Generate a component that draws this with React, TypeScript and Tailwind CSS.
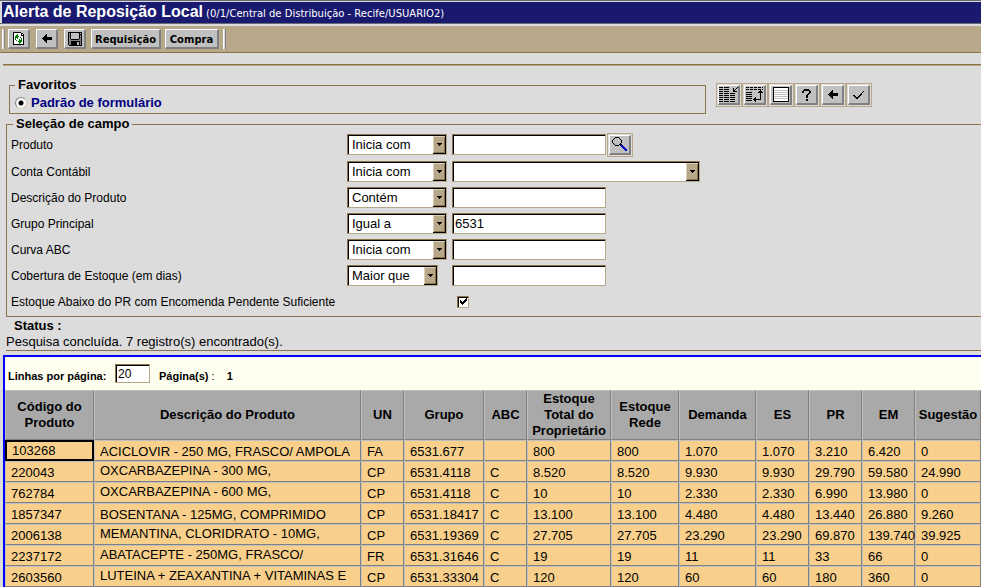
import React, { useState } from "react";

const arial = "font-['Liberation_Sans',Arial,sans-serif]";

type IconProps = { rows: string[] };

/* Pixel icons: each string is one row, "#" = black, letters pick a colour. */
const palette: Record<string, string> = {
  "#": "#000000",
  w: "#ffffff",
  g: "#008000",
  b: "#0000d0",
  s: "#c0c0c0",
  d: "#808080",
};

function PixelIcon({ rows }: IconProps) {
  const width = Math.max(...rows.map((r) => r.length));
  return (
    <svg
      width={width}
      height={rows.length}
      viewBox={`0 0 ${width} ${rows.length}`}
      shapeRendering="crispEdges"
      aria-hidden="true"
    >
      {rows.flatMap((row, y) =>
        row
          .split("")
          .map((c, x) =>
            palette[c] ? <rect key={`${x}-${y}`} x={x} y={y} width={1} height={1} fill={palette[c]} /> : null
          )
      )}
    </svg>
  );
}

const refreshIcon = [
  "########...",
  "#wwwwwww##.",
  "#wwwgwww#w#",
  "#wwggwww###",
  "#wggggwwww#",
  "#wgggwwgww#",
  "#wgwgwwwgw#",
  "#wgwwwgwgw#",
  "#wwgwwgggw#",
  "#wwwwggggw#",
  "#wwwwwggww#",
  "#wwwwwgwww#",
  "###########",
];
const backIcon = [
  "....#.....",
  "...##.....",
  "..###.....",
  ".#########",
  "##########",
  ".#########",
  "..###.....",
  "...##.....",
  "....#.....",
];
const saveIcon = [
  "##############",
  "#d#ssssssss#s#",
  "#d#ssssssss###",
  "#d#ssssssss#d#",
  "#d#ssssssss#d#",
  "#d#ssssssss#d#",
  "#d#ssssssss#d#",
  "#dd########dd#",
  "#dddddddddddd#",
  "#dd#########d#",
  "#dd######ss#d#",
  "#dd######ss#d#",
  "#dd######ss#d#",
  ".#############",
];
const columnsIcon = [
  "####.#####........#",
  "..............#..#.",
  "####.#####....#.#..",
  "..............##...",
  "####.#####....####.",
  "...................",
  "####.#####.#####...",
  "...................",
  "####.#####.#####...",
  "...................",
  "####.#####.#####...",
  "...................",
  "####.#####.#####...",
  "...................",
  "####.#####.#####...",
];
const sortIcon = [
  "###.###.###.###.#",
  ".................",
  "###.###.###.###.#",
  "..............#..",
  ".............###.",
  "######......#####",
  "..............#..",
  "######........#..",
  "..............#..",
  "######........#..",
  ".........#....#..",
  "######..##....#..",
  ".......########..",
  "######..##.......",
  ".........#.......",
];
const listIcon = [
  "################",
  "#wwwwwwwwwwwwww#",
  "#wwwwwwwwwwwwww#",
  "#ssssssssssssss#",
  "#wwwwwwwwwwwwww#",
  "#ssssssssssssss#",
  "#wwwwwwwwwwwwww#",
  "#ssssssssssssss#",
  "#wwwwwwwwwwwwww#",
  "#ssssssssssssss#",
  "#wwwwwwwwwwwwww#",
  "#ssssssssssssss#",
  "#wwwwwwwwwwwwww#",
  "#wwwwwwwwwwwwww#",
  "################",
];
const helpIcon = [
  "..#####..",
  ".#######.",
  "##.....##",
  "##.....##",
  "......##.",
  ".....##..",
  "....##...",
  "....##...",
  "....##...",
  ".........",
  "....##...",
  "....##...",
];
const checkIcon = [
  "..........#",
  ".........#.",
  "........#..",
  ".......##..",
  "##....##...",
  ".##..##....",
  "..####.....",
  "...##......",
];
const lensIcon = [
  "...####.........",
  "..#....#........",
  ".#......#.......",
  "#........#......",
  "#........#......",
  "#........#......",
  ".#......#.......",
  "..#....###......",
  "...####.bb#.....",
  ".........bbb....",
  "..........bbb...",
  "...........bbb..",
  "............bbb.",
  ".............bb.",
];

function ToolButton({ label, className, children }: { label?: string; className: string; children: React.ReactNode }) {
  return (
    <button
      type="button"
      aria-label={label}
      className={`flex h-5 shrink-0 items-center justify-center border-t border-r-2 border-b-2 border-l border-t-white border-r-[#808080] border-b-[#808080] border-l-white bg-[#c0c0c0] text-black ${className}`}
    >
      {children}
    </button>
  );
}

function FramedButton({ label, icon }: { label: string; icon: string[] }) {
  return (
    <span className="flex shrink-0 border border-[#b8a88a] p-px">
      <ToolButton label={label} className="w-[22px]">
        <PixelIcon rows={icon} />
      </ToolButton>
    </span>
  );
}

function Grip() {
  return <span className="h-[20px] w-[3px] shrink-0 border-x border-l-white border-r-[#808080] bg-[#dcdcdc]" />;
}

function DropDown({ label, value, className }: { label: string; value: string; className: string }) {
  return (
    <div
      className={`relative h-[21px] shrink-0 border border-t-[#8b7349] border-r-[#b8a88a] border-b-[#b8a88a] border-l-[#8b7349] ${className}`}
    >
      <select
        aria-label={label}
        defaultValue={value}
        className="block h-[19px] w-full appearance-none border-t border-l border-black bg-white pl-[3px] text-[13px] leading-[18px] text-black outline-none"
      >
        <option>{value}</option>
      </select>
      <span className="pointer-events-none absolute top-px right-0 flex h-[18px] w-[13px] items-center justify-center border-r border-b border-black bg-[#b8a88a] shadow-[inset_1px_1px_0_#dccfb8,inset_-1px_-1px_0_#8b7349]">
        <PixelIcon rows={["#####", ".###.", "..#.."]} />
      </span>
    </div>
  );
}

function TextBox({ id, value = "", className }: { id: string; value?: string; className: string }) {
  return (
    <input
      id={id}
      type="text"
      defaultValue={value}
      className={`h-[21px] shrink-0 border border-t-[#8b7349] border-r-[#b8a88a] border-b-[#b8a88a] border-l-[#8b7349] bg-white px-[2px] text-[13px] text-black shadow-[inset_1px_1px_0_#000] outline-none ${className}`}
    />
  );
}

type Field = { id: string; label: string; op: string; opWidth: string; kind: "lookup" | "select" | "text"; value?: string };

const fields: Field[] = [
  { id: "produto", label: "Produto", op: "Inicia com", opWidth: "w-[100px]", kind: "lookup" },
  { id: "conta", label: "Conta Contábil", op: "Inicia com", opWidth: "w-[100px]", kind: "select" },
  { id: "descricao", label: "Descrição do Produto", op: "Contém", opWidth: "w-[100px]", kind: "text" },
  { id: "grupo", label: "Grupo Principal", op: "Igual a", opWidth: "w-[100px]", kind: "text", value: "6531" },
  { id: "curva", label: "Curva ABC", op: "Inicia com", opWidth: "w-[100px]", kind: "text" },
  { id: "cobertura", label: "Cobertura de Estoque (em dias)", op: "Maior que", opWidth: "w-[91px]", kind: "text" },
];

const columns = [
  { title: "Código do Produto", width: "w-[89px]" },
  { title: "Descrição do Produto", width: "" },
  { title: "UN", width: "w-[43px]" },
  { title: "Grupo", width: "w-[80px]" },
  { title: "ABC", width: "w-[43px]" },
  { title: "Estoque Total do Proprietário", width: "w-[84px]" },
  { title: "Estoque Rede", width: "w-[68px]" },
  { title: "Demanda", width: "w-[77px]" },
  { title: "ES", width: "w-[53px]" },
  { title: "PR", width: "w-[53px]" },
  { title: "EM", width: "w-[53px]" },
  { title: "Sugestão", width: "w-[66px]" },
];

const records = [
  ["103268", "ACICLOVIR - 250 MG, FRASCO/ AMPOLA", "FA", "6531.677", "", "800", "800", "1.070", "1.070", "3.210", "6.420", "0"],
  ["220043", "OXCARBAZEPINA - 300 MG,", "CP", "6531.4118", "C", "8.520", "8.520", "9.930", "9.930", "29.790", "59.580", "24.990"],
  ["762784", "OXCARBAZEPINA - 600 MG,", "CP", "6531.4118", "C", "10", "10", "2.330", "2.330", "6.990", "13.980", "0"],
  ["1857347", "BOSENTANA - 125MG, COMPRIMIDO", "CP", "6531.18417", "C", "13.100", "13.100", "4.480", "4.480", "13.440", "26.880", "9.260"],
  ["2006138", "MEMANTINA, CLORIDRATO - 10MG,", "CP", "6531.19369", "C", "27.705", "27.705", "23.290", "23.290", "69.870", "139.740", "39.925"],
  ["2237172", "ABATACEPTE - 250MG, FRASCO/", "FR", "6531.31646", "C", "19", "19", "11", "11", "33", "66", "0"],
  ["2603560", "LUTEINA + ZEAXANTINA + VITAMINAS E", "CP", "6531.33304", "C", "120", "120", "60", "60", "180", "360", "0"],
];

const clipped = new Set(["220043", "762784", "2006138", "2237172", "2603560"]);

const cellBorder = "border-t border-r border-b border-l border-t-[#c0c0c0] border-r-[#808080] border-b-[#808080] border-l-[#c0c0c0]";

export default function App() {
  const [selected, setSelected] = useState("103268");

  return (
    <div className={`min-h-screen overflow-hidden bg-[#dcdcdc] text-[13px] text-black ${arial}`}>
      <header className="flex h-6 items-center gap-[3px] border-t border-b border-[#696973] bg-[#191970] pl-[3px] whitespace-nowrap text-white shadow-[inset_2px_1px_0_#dcdcdc]">
        <h1 className="text-[16px] leading-5 font-bold">Alerta de Reposição Local</h1>
        <span className="pt-1 font-['DejaVu_Sans',Verdana,sans-serif] text-[10px] leading-4">
          (0/1/Central de Distribuição - Recife/USUARIO2)
        </span>
      </header>

      <div className="mt-0.5 flex h-[27px] items-center border-b border-[#8b7349] bg-[#b8a88a] pl-0.5 font-['DejaVu_Sans',Verdana,sans-serif] text-[10px] font-bold">
        <Grip />
        <div className="ml-[3px] flex gap-1.5">
          <ToolButton label="Atualizar" className="w-[22px]">
            <PixelIcon rows={refreshIcon} />
          </ToolButton>
          <ToolButton label="Voltar" className="w-[22px]">
            <PixelIcon rows={backIcon} />
          </ToolButton>
          <ToolButton label="Salvar" className="w-[22px]">
            <PixelIcon rows={saveIcon} />
          </ToolButton>
        </div>
        <div className="mr-1 ml-[5px] flex gap-1">
          <ToolButton className="w-[70px] pt-0.5">Requisição</ToolButton>
          <ToolButton className="w-[54px] pt-0.5">Compra</ToolButton>
        </div>
        <Grip />
      </div>

      <div className="mt-[11px] ml-[3px] h-0.5 border-t border-[#8b7349] bg-[#b8a88a]" />

      <section className="mt-[11px] flex items-start gap-[10px] pl-[9px]">
        <fieldset className="w-[697px] border border-[#8b7349] pt-px pb-px pl-[5px]">
          <legend className="px-[3px] text-[13px] leading-4 font-bold">Favoritos</legend>
          <label className="flex h-[18px] items-center gap-1 font-bold text-[#000080]">
            <input
              type="radio"
              name="favorito"
              defaultChecked
              className="h-3 w-3 appearance-none rounded-full border border-t-[#808080] border-r-[#d8cdb8] border-b-[#d8cdb8] border-l-[#808080] bg-white checked:bg-[radial-gradient(circle,#000_2px,#fff_3px)]"
            />
            <span>Padrão de formulário</span>
          </label>
        </fieldset>
        <div className="mt-1.5 flex">
          <FramedButton label="Colunas" icon={columnsIcon} />
          <FramedButton label="Ordenar" icon={sortIcon} />
          <FramedButton label="Lista" icon={listIcon} />
          <FramedButton label="Ajuda" icon={helpIcon} />
          <FramedButton label="Voltar" icon={backIcon} />
          <FramedButton label="Confirmar" icon={checkIcon} />
        </div>
      </section>

      <fieldset className="mt-[2px] ml-[6px] border border-r-0 border-[#8b7349] pb-0.5 pl-1">
        <legend className="ml-[2px] px-[3px] leading-4 font-bold">Seleção de campo</legend>
        <div className="flex flex-col gap-px">
          {fields.map((f) => (
            <div key={f.id} className="flex h-[25px] items-center first:mb-px">
              <label htmlFor={f.id} className="w-[336px] shrink-0 pt-px text-[12px]">
                {f.label}
              </label>
              <div className="w-[105px] shrink-0">
                <DropDown label={`Operador: ${f.label}`} value={f.op} className={f.opWidth} />
              </div>
              {f.kind === "select" ? (
                <DropDown label={f.label} value="" className="w-[248px]" />
              ) : (
                <TextBox id={f.id} value={f.value} className="w-[154px]" />
              )}
              {f.kind === "lookup" && (
                <span className="ml-px flex">
                  <FramedButton label="Pesquisar produto" icon={lensIcon} />
                </span>
              )}
            </div>
          ))}
          <div className="flex h-[25px] items-center">
            <label htmlFor="pendente" className="w-[336px] shrink-0 pt-px text-[12px]">
              Estoque Abaixo do PR com Encomenda Pendente Suficiente
            </label>
            <span className="ml-[110px] grid">
              <input
                id="pendente"
                type="checkbox"
                defaultChecked
                className="peer col-start-1 row-start-1 h-3 w-3 appearance-none border border-t-[#8b7349] border-r-[#b8a88a] border-b-[#b8a88a] border-l-[#8b7349] bg-white shadow-[inset_1px_1px_0_#000]"
              />
              <span className="pointer-events-none invisible col-start-1 row-start-1 self-center justify-self-center peer-checked:visible">
                <PixelIcon rows={["......#", ".....##", "#...###", "##.###.", "#####..", ".###...", "..#...."]} />
              </span>
            </span>
          </div>
        </div>
      </fieldset>

      <section className="ml-[6px] border-b border-[#8b7349]">
        <h2 className="pl-2 leading-[17px] font-bold">Status :</h2>
        <p className="leading-4">Pesquisa concluída. 7 registro(s) encontrado(s).</p>
      </section>

      <main className="mt-1 ml-[3px] border-t-2 border-l-2 border-[#0000ff] bg-[#fffff0]">
        <div className="flex h-[33px] items-center pl-[3px] text-[11px] font-bold">
          <label htmlFor="linhas" className="w-[107px] pt-1.5">
            Linhas por página:
          </label>
          <input
            id="linhas"
            type="text"
            defaultValue="20"
            className="h-[19px] w-[35px] border border-t-[#8b7349] border-r-[#b8a88a] border-b-[#b8a88a] border-l-[#8b7349] bg-white px-[2px] text-[12px] font-normal shadow-[inset_1px_1px_0_#000] outline-none"
          />
          <span className="pt-1.5 pl-[9px]">
            Página(s) <span className="font-normal">:</span>
          </span>
          <span className="pt-1.5 pl-3">1</span>
        </div>

        <table className="w-full min-w-[976px] table-fixed border-separate border-spacing-0">
          <thead>
            <tr className="h-[50px] bg-[#a9a9a9]">
              {columns.map((c) => (
                <th key={c.title} className={`${cellBorder} ${c.width} p-0 align-middle text-[13px] leading-4 font-bold`}>
                  {c.title}
                </th>
              ))}
            </tr>
          </thead>
          <tbody>
            {records.map((r) => (
              <tr key={r[0]} className="h-[21px] bg-[#f9d08b]" onClick={() => setSelected(r[0])}>
                {r.map((value, i) => (
                  <td
                    key={i}
                    className={
                      i === 0 && selected === r[0]
                        ? "border-2 border-black p-0 pt-px pl-[5px] leading-4 whitespace-nowrap"
                        : `${cellBorder} p-0 pl-[5px] whitespace-nowrap ${
                            i === 1 && clipped.has(r[0]) ? "pt-px align-top leading-4" : "pt-0.5 align-middle leading-[17px]"
                          }`
                    }
                  >
                    {value}
                  </td>
                ))}
              </tr>
            ))}
          </tbody>
        </table>
      </main>
    </div>
  );
}
